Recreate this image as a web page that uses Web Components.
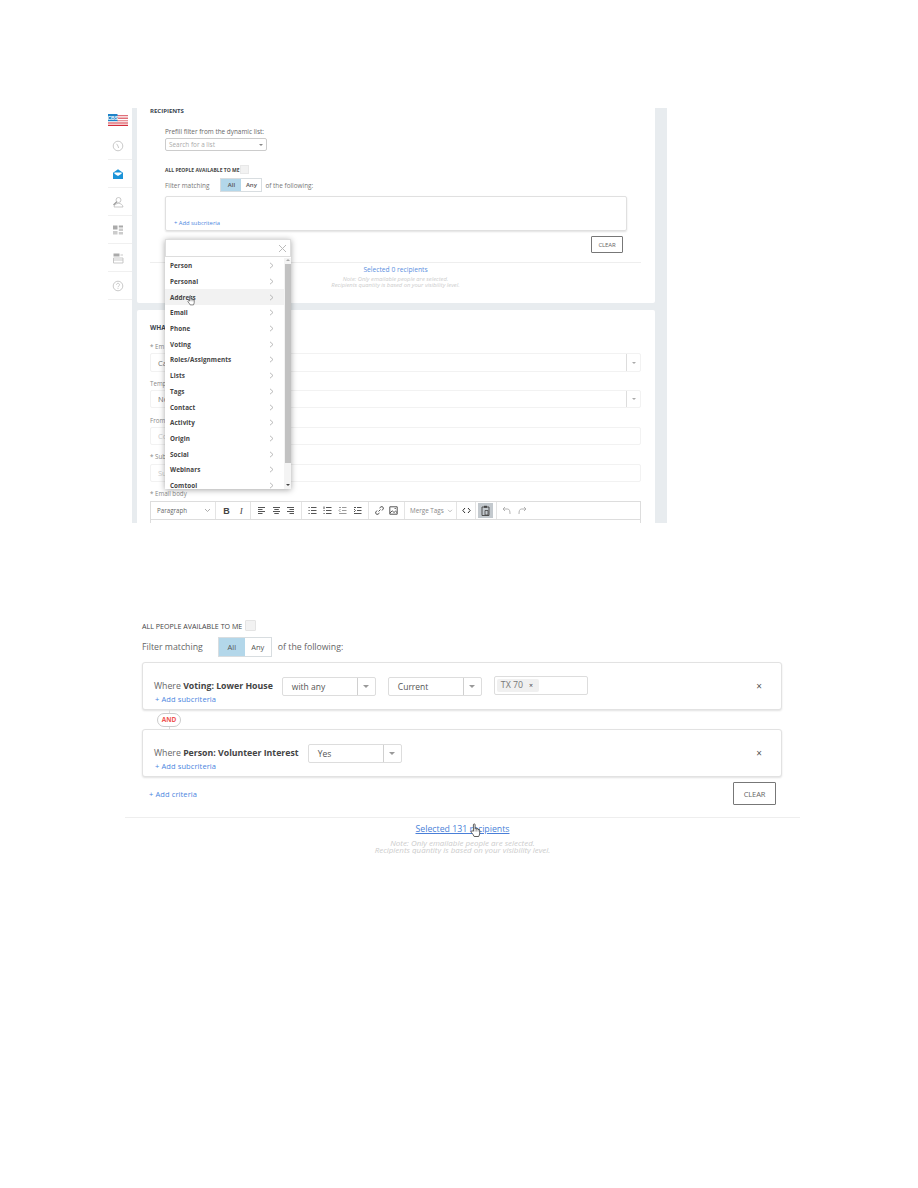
<!DOCTYPE html>
<html>
<head>
<meta charset="utf-8">
<title>Recipients</title>
<style>
  html, body { margin: 0; background: #fff; }
  body { font-family: "Open Sans", "Liberation Sans", sans-serif; color: #555; }
</style>
</head>
<body>
<top-shot></top-shot>
<filter-shot></filter-shot>

<script>
const CHEVRON = `<svg width="5" height="7" viewBox="0 0 5 7"><path d="M1 .8 4 3.5 1 6.2" fill="none" stroke="#aaa" stroke-width=".8"/></svg>`;

class HandCursor extends HTMLElement {
  constructor() {
    super();
    this.attachShadow({ mode: "open" }).innerHTML = `
      <style>
        :host { position: absolute; display: block; width: 12px; height: 15px; z-index: 5; }
        svg { display: block; width: 100%; height: 100%; }
      </style>
      <svg viewBox="0 0 12 15">
        <path d="M3.4 8.2V1.8c0-1.2 1.7-1.2 1.7 0v4c0-.9 1.6-.9 1.6 0v.5c0-.9 1.5-.9 1.5 0v.6c0-.8 1.5-.8 1.5.1v3.3c0 1.5-.7 2.2-1 3.2H4.2C3.6 12 2.6 11 1.3 9.4.6 8.4 1.7 7.3 2.6 8z" fill="#fff" stroke="#333" stroke-width=".8" stroke-linejoin="round"/>
        <path d="M5.1 6v2.6M6.7 6.3v2.3M8.2 6.8v1.8" stroke="#555" stroke-width=".5"/>
      </svg>`;
  }
}
customElements.define("hand-cursor", HandCursor);

class SideRail extends HTMLElement {
  constructor() {
    super();
    const stroke = `fill="none" stroke="#bbb" stroke-width=".8"`;
    const icons = [
      `<circle cx="6" cy="6" r="4.8" ${stroke}/><path d="M4.6 3.8 6 6l.6 2" ${stroke}/>`,
      `<path d="M1 4.8 6 1.2l5 3.6V11H1z" fill="#1b93d8"/><path d="M2.4 4.6h7.2v1.2L6 8 2.4 5.8z" fill="#fff"/>`,
      `<circle cx="6.5" cy="4" r="2.5" ${stroke}/><path d="M2 11c.4-2.6 2.5-3.6 4.5-3.6s4.1 1 4.5 3.6z" ${stroke}/><path d="M4.8 5.8 1.5 9" stroke="#999" stroke-width="1.2"/>`,
      `<path d="M1 1.5h4.5v4H1zM6.8 1.5H11v2H6.8z" fill="#aaa"/><path d="M1 7h4.5v3.500H1zM6.8 4.5H11V7H6.8zM6.8 8H11v2.500H6.8z" fill="#ccc"/>`,
      `<path d="M1.5 1.5v3h6v-3z" fill="#aaa"/><path d="M1.5 6H11v5H1.5z" ${stroke}/><path d="M1.5 8H11M8.5 3H11" ${stroke}/>`,
      `<circle cx="6" cy="6" r="4.8" ${stroke}/><path d="M4.5 4.8c0-2 3-2 3 0 0 1.2-1.5 1.2-1.5 2.4M6 8.2V9" ${stroke}/>`
    ];
    this.attachShadow({ mode: "open" }).innerHTML = `
      <style>
        :host { display: block; width: 24px; background: #fff; }
        .logo { height: 24px; display: flex; align-items: center; }
        .item { height: 27px; border-bottom: 1px solid #f0f0f0; display: flex; align-items: center; justify-content: center; }
        .item svg { margin-left: -4px; }
      </style>
      <div class="logo">
        <svg width="20" height="12" viewBox="0 0 20 12">
          <path d="M9 1h11v1.3H9zM9 3.600h11v1.3H9zM9 6.200h11v1H9z" fill="#e0707a"/>
          <path d="M0 8.400h20v1.2H0zM0 10.800h20V12H0z" fill="#d42c3a"/>
          <path d="M0 0h9.500v7.200H0z" fill="#1f83c8"/>
          <text x="4.700" y="5.800" text-anchor="middle" font-family="Liberation Sans, sans-serif" font-size="5" font-weight="700" fill="#fff">CBS</text>
        </svg>
      </div>
      ${icons.map(i => `<div class="item"><svg width="12" height="12" viewBox="0 0 12 12">${i}</svg></div>`).join("")}`;
  }
}
customElements.define("side-rail", SideRail);

class FilterToggle extends HTMLElement {
  constructor() {
    super();
    this.attachShadow({ mode: "open" }).innerHTML = `
      <style>
        :host { display: flex; height: var(--h, 14px); border: 1px solid #d8dde0; box-sizing: border-box; font-size: var(--fs, 6px); font-weight: 600; }
        span { display: flex; align-items: center; justify-content: center; width: var(--w, 20px); color: #555; }
        .on { background: #b3d7ea; }
      </style>
      <span class="on">All</span><span>Any</span>`;
  }
}
customElements.define("filter-toggle", FilterToggle);

class ClearButton extends HTMLElement {
  constructor() {
    super();
    this.attachShadow({ mode: "open" }).innerHTML = `
      <style>
        :host { display: flex; align-items: center; justify-content: center; box-sizing: border-box; border: 1px solid #777; border-radius: 1px; color: #666; letter-spacing: -.1px; width: var(--w, 32px); height: var(--h, 17px); font-size: var(--fs, 6px); background: #fff; }
      </style>
      CLEAR`;
  }
}
customElements.define("clear-button", ClearButton);

class CaretSelect extends HTMLElement {
  constructor() {
    super();
    this.attachShadow({ mode: "open" }).innerHTML = `
      <style>
        :host { display: flex; box-sizing: border-box; width: 94px; height: 19px; border: 1px solid #ddd; border-radius: 2px; background: #fff; font-size: 8.5px; color: #555; flex: none; }
        .val { flex: 1; display: flex; align-items: center; padding-left: 9px; }
        .arrow { width: 17px; border-left: 1px solid #d0d0d0; display: flex; align-items: center; justify-content: center; }
        .arrow i { border: 3px solid transparent; border-top: 3px solid #999; border-bottom: 0; width: 0; height: 0; }
      </style>
      <div class="val"><slot></slot></div><div class="arrow"><i></i></div>`;
  }
}
customElements.define("caret-select", CaretSelect);

class CriteriaBox extends HTMLElement {
  constructor() {
    super();
    const where = this.getAttribute("where");
    this.attachShadow({ mode: "open" }).innerHTML = `
      <style>
        :host { display: block; box-sizing: border-box; height: 48px; border: 1px solid #e2e2e2; border-radius: 3px; box-shadow: 0 1px 2px rgba(0,0,0,.12); padding: 13px 0 0 11px; background: #fff; }
        .row { display: flex; align-items: center; gap: 12px; height: 20px; }
        .where { font-size: 8.75px; color: #666; margin-right: -3px; white-space: nowrap; }
        b { color: #444; font-weight: 700; }
        .close { margin-left: auto; margin-right: 19px; font-size: 10px; color: #555; line-height: 1; }
        .add { font-size: 7.5px; line-height: 8px; color: #4a86e0; margin: -1px 0 0 1px; letter-spacing: .1px; }
      </style>
      <div class="row">
        <div class="where">Where <b>${where}</b></div>
        <slot></slot>
        <div class="close">×</div>
      </div>
      <div class="add">+ Add subcriteria</div>`;
  }
}
customElements.define("criteria-box", CriteriaBox);

class TagInput extends HTMLElement {
  constructor() {
    super();
    this.attachShadow({ mode: "open" }).innerHTML = `
      <style>
        :host { display: flex; align-items: center; box-sizing: border-box; width: 94px; height: 19px; margin-top: -2px; border: 1px solid #ddd; border-radius: 2px; padding-left: 2px; flex: none; }
        .chip { width: 42px; height: 13px; box-sizing: border-box; background: #f0f0f0; border-radius: 2px; font-size: 8.8px; color: #777; display: flex; align-items: center; padding-left: 4px; gap: 6px; }
        .chip i { font-style: normal; font-size: 7px; color: #444; }
      </style>
      <div class="chip">TX 70 <i>×</i></div>`;
  }
}
customElements.define("tag-input", TagInput);

class FieldDropdown extends HTMLElement {
  constructor() {
    super();
    const groups = ["Person", "Personal", "Address", "Email", "Phone", "Voting", "Roles/Assignments", "Lists", "Tags", "Contact", "Activity", "Origin", "Social", "Webinars", "Comtool"];
    this.attachShadow({ mode: "open" }).innerHTML = `
      <style>
        :host { position: absolute; left: 57px; top: 131px; width: 126px; height: 250px; background: #fff; box-shadow: 0 1px 6px rgba(0,0,0,.35); z-index: 3; display: block; overflow: hidden; }
        .search { height: 18px; border: 1px solid #ddd; box-sizing: border-box; display: flex; align-items: center; justify-content: flex-end; padding-right: 3px; margin-bottom: 1px; }
        .body { display: flex; height: 231px; }
        .list { flex: 1; overflow: hidden; }
        .row { height: 15.7px; display: flex; align-items: center; justify-content: space-between; padding: 0 10px 0 5px; font-size: 6.3px; font-weight: 700; color: #444; letter-spacing: .1px; }
        .row.hover { background: #f2f2f2; }
        .bar { width: 7px; background: #f4f4f4; position: relative; display: flex; flex-direction: column; align-items: center; }
        .thumb { width: 6px; height: 199px; margin-top: 6px; background: #c2c2c2; }
        .up, .down { position: absolute; border: 2px solid transparent; width: 0; height: 0; }
        .up { top: 1px; border-bottom: 2px solid #aaa; border-top: 0; }
        .down { bottom: 3px; border-top: 2px solid #444; border-bottom: 0; }
      </style>
      <div class="search"><svg width="9" height="9" viewBox="0 0 9 9"><path d="M1 1l7 7M8 1 1 8" stroke="#bbb" stroke-width="1"/></svg></div>
      <div class="body">
        <div class="list">${groups.map(g => `<div class="row${g === "Address" ? " hover" : ""}">${g}${CHEVRON}</div>`).join("")}</div>
        <div class="bar"><i class="up"></i><div class="thumb"></div><i class="down"></i></div>
      </div>`;
  }
}
customElements.define("field-dropdown", FieldDropdown);

class EditorToolbar extends HTMLElement {
  constructor() {
    super();
    const c = `stroke="#555" stroke-width="1" fill="none"`;
    const svg = (d, extra = c) => `<svg width="9" height="9" viewBox="0 0 9 9"><path d="${d}" ${extra}/></svg>`;
    const groups = [
      [65, `<span class="para">Paragraph</span><svg width="7" height="5" viewBox="0 0 7 5"><path d="M1 1l2.5 2.5L6 1" fill="none" stroke="#999" stroke-width=".8"/></svg>`, "space-between", "0 4px 0 6px"],
      [35, `<b>B</b><i>I</i>`, "center", "0", "10px"],
      [51, svg("M1 1.5h7M1 3.5h4.5M1 5.5h7M1 7.5h4.5") + svg("M1 1.5h7M2.3 3.5h4.5M1 5.5h7M2.3 7.5h4.5") + svg("M1 1.5h7M3.5 3.5H8M1 5.5h7M3.5 7.5H8")],
      [67, svg("M3 1.5h5.5M3 4.5h5.5M3 7.5h5.5M.5 1.5h1.2M.5 4.5h1.2M.5 7.5h1.2") + svg("M3 1.5h5.5M3 4.5h5.5M3 7.5h5.5M1 .5V3M.5 4.5h1.2M.5 7.5h1.2") + svg("M4 1.5h4.5M4 4.5h4.5M1 7.5h7.5M1 1.5h2M2.5 3 1 4.5 2.5 6", `stroke="#999" stroke-width="1" fill="none"`) + svg("M4 1.5h4.5M4 4.5h4.5M1 7.5h7.5M1 1.5h2M1 3l1.5 1.5L1 6")],
      [36, svg("M3.5 5.500 5.500 3.500M4.500 2 6 .8c1.500-.8 3 1 2.200 2.200L7 4.500M4.500 7 3 8.200C1.500 9 0 7.200.8 6L2 4.500") + svg("M.8.8h7.400v7.400H.8zM1 7l2.200-2.200L5 6.500l1.500-1.300L8 6.500M5.600 2.500h1.200")],
      [52, `<span class="merge">Merge Tags</span><svg width="6" height="4" viewBox="0 0 7 5"><path d="M1 1l2.5 2.5L6 1" fill="none" stroke="#999" stroke-width=".8"/></svg>`, "flex-start", "0 0 0 5px", "3px"],
      [19, svg("M3 2 .8 4.5 3 7M6 2l2.2 2.5L6 7", `stroke="#333" stroke-width="1" fill="none"`)],
      [21, `<span class="active"><svg width="9" height="11" viewBox="0 0 9 11"><path d="M1 2h7v8.5H1z" fill="none" stroke="#444" stroke-width=".9"/><path d="M3 .8h3v2H3z" fill="#444"/><path d="M4 5.5h3V10H4z" fill="none" stroke="#444" stroke-width=".8"/></svg></span>`, "flex-start", "0 0 0 2px"],
      [0, svg("M3 1 1 3l2 2M1 3h4.5C7.5 3 8 5 8 8", `stroke="#aaa" stroke-width=".9" fill="none"`) + svg("M6 1l2 2-2 2M8 3H3.5C1.5 3 1 5 1 8", `stroke="#aaa" stroke-width=".9" fill="none"`), "flex-start", "0 0 0 5px", "7px"]
    ];
    this.attachShadow({ mode: "open" }).innerHTML = `
      <style>
        :host { display: flex; height: 19px; box-sizing: border-box; border: 1px solid #ddd; background: #fff; }
        .g { display: flex; align-items: center; box-sizing: border-box; border-right: 1px solid #e4e4e4; height: 100%; justify-content: space-evenly; }
        .g:last-child { border-right: 0; flex: 1; }
        .para { font-size: 6.2px; color: #666; }
        .merge { font-size: 6.3px; color: #888; }
        b { font: 700 9px "Liberation Sans", sans-serif; color: #444; }
        i { font: italic 400 9px "Liberation Serif", serif; color: #444; }
        .active { width: 15px; height: 15px; background: #c3c9ce; display: flex; align-items: center; justify-content: center; }
      </style>
      ${groups.map(([w, html, jc, pad, gap]) => `<div class="g" style="${w ? `width:${w}px;flex:none;` : ""}${jc ? `justify-content:${jc};` : ""}${pad ? `padding:${pad};` : ""}${gap ? `gap:${gap};` : ""}">${html}</div>`).join("")}`;
  }
}
customElements.define("editor-toolbar", EditorToolbar);

class RecipientsCard extends HTMLElement {
  constructor() {
    super();
    this.attachShadow({ mode: "open" }).innerHTML = `
      <style>
        :host { display: block; background: #fff; height: 195px; box-sizing: border-box; padding: 0 14px 0 13px; border-radius: 0 0 2px 2px; font-size: 6.4px; }
        .title { font-size: 6px; line-height: 7px; font-weight: 700; color: #3b4652; }
        .in { margin-left: 15px; }
        .prefill { margin-top: 13px; line-height: 8px; color: #666; }
        .select { margin-top: 2px; width: 102px; height: 13px; box-sizing: border-box; border: 1px solid #ccc; border-radius: 2px; display: flex; align-items: center; justify-content: space-between; padding: 0 3px; color: #aaa; font-size: 6.4px; }
        .select i { border: 2px solid transparent; border-top: 2.5px solid #888; border-bottom: 0; }
        .all { margin-top: 14px; height: 9px; display: flex; align-items: center; gap: 1px; font-size: 5px; font-weight: 700; color: #444; white-space: nowrap; }
        .check { width: 9px; height: 9px; background: #f2f2f2; border: 1px solid #e8e8e8; box-sizing: border-box; }
        .match { margin-top: 4px; display: flex; align-items: center; color: #777; }
        filter-toggle { margin: 0 3px 0 11px; --w: 20px; }
        .box { margin: 4px 14px 0 15px; height: 35px; box-sizing: border-box; border: 1px solid #e0e0e0; border-radius: 2px; box-shadow: 0 1px 2px rgba(0,0,0,.12); display: flex; align-items: flex-end; padding: 0 0 3px 8px; color: #4a86e0; font-size: 5.8px; }
        .clear { margin: 5px 18px 0 0; display: flex; justify-content: flex-end; }
        hr { border: 0; border-top: 1px solid #eee; margin: 9px 0 0; }
        .sel { margin-top: 3px; text-align: center; line-height: 8px; color: #5b8fe0; font-size: 6.7px; }
        .note { margin-top: 3px; text-align: center; line-height: 5.5px; color: #ccc; font-style: italic; font-size: 5.8px; }
      </style>
      <div class="title">RECIPIENTS</div>
      <div class="in prefill">Prefill filter from the dynamic list:</div>
      <div class="in select">Search for a list<i></i></div>
      <div class="in all">ALL PEOPLE AVAILABLE TO ME <span class="check"></span></div>
      <div class="in match">Filter matching<filter-toggle></filter-toggle>of the following:</div>
      <div class="box">+ Add subcriteria</div>
      <div class="clear"><clear-button></clear-button></div>
      <hr>
      <div class="sel">Selected 0 recipients</div>
      <div class="note">Note: Only emailable people are selected.<br>Recipients quantity is based on your visibility level.</div>`;
  }
}
customElements.define("recipients-card", RecipientsCard);

class WhatCard extends HTMLElement {
  constructor() {
    super();
    const caret = `<span class="caret"><i></i></span>`;
    this.attachShadow({ mode: "open" }).innerHTML = `
      <style>
        :host { display: block; background: #fff; margin-top: 7px; padding: 14px 14px 0 13px; border-radius: 2px 2px 0 0; height: 300px; box-sizing: border-box; font-size: 6.2px; }
        .title { font-size: 6.5px; line-height: 7px; font-weight: 700; color: #3b4652; }
        .label { line-height: 8px; margin-top: 8px; color: #888; }
        .first { margin-top: 12px; }
        .control { display: flex; align-items: center; justify-content: space-between; margin-top: 2px; height: 18px; box-sizing: border-box; border: 1px solid #f2f2f2; border-radius: 2px; padding-left: 7px; font-size: 7.5px; color: #777; }
        .dim { color: #ccc; }
        .caret { width: 13px; height: 100%; border-left: 1px solid #ddd; display: flex; align-items: center; justify-content: center; }
        .caret i { border: 2px solid transparent; border-top: 2.5px solid #aaa; border-bottom: 0; }
        .tall { height: 19px; }
        .low { margin-top: 3px; }
        .l9 { margin-top: 9px; }
        editor-toolbar { margin-top: 3px; }
        .editor { height: 60px; border: 1px solid #ddd; border-top: 0; }
      </style>
      <div class="title">WHA</div>
      <div class="label first">* Em</div>
      <div class="control tall">Ca${caret}</div>
      <div class="label">Temp</div>
      <div class="control">No${caret}</div>
      <div class="label l9">From</div>
      <div class="control dim">Co</div>
      <div class="label">* Sub</div>
      <div class="control low dim">Su</div>
      <div class="label">* Email body</div>
      <editor-toolbar></editor-toolbar>
      <div class="editor"></div>`;
  }
}
customElements.define("what-card", WhatCard);

class TopShot extends HTMLElement {
  constructor() {
    super();
    this.attachShadow({ mode: "open" }).innerHTML = `
      <style>
        :host { display: flex; position: relative; margin: 108px 0 0 108px; width: 559px; height: 415px; overflow: hidden; }
        .main { flex: 1; background: #e8ecef; padding: 0 12px 0 5px; overflow: hidden; }
        hand-cursor { left: 79px; top: 187px; width: 9px; height: 11px; }
      </style>
      <side-rail></side-rail>
      <div class="main">
        <recipients-card></recipients-card>
        <what-card></what-card>
      </div>
      <field-dropdown></field-dropdown>
      <hand-cursor></hand-cursor>`;
  }
}
customElements.define("top-shot", TopShot);

class FilterShot extends HTMLElement {
  constructor() {
    super();
    this.attachShadow({ mode: "open" }).innerHTML = `
      <style>
        :host { display: block; position: relative; margin: 87px 0 0 125px; width: 675px; padding-top: 10px; font-size: 8.75px; }
        .in { margin: 0 18px 0 17px; }
        .all { height: 11px; display: flex; align-items: center; gap: 3px; font-size: 7.1px; color: #444; font-weight: 400; white-space: nowrap; }
        .check { width: 11px; height: 11px; box-sizing: border-box; background: #f2f2f2; border: 1px solid #e4e4e4; border-radius: 1px; }
        .match { margin-top: 6px; display: flex; align-items: center; color: #666; }
        filter-toggle { margin: 0 6px 0 15px; --w: 26px; --h: 20px; --fs: 7.5px; font-weight: 400; }
        .first { margin-top: 5px; }
        .and { height: 19px; display: flex; align-items: center; margin-left: 15px; background: linear-gradient(#ddd, #ddd) 12px 0 / 1px 100% no-repeat; width: 24px; }
        .and span { width: 24px; height: 14px; box-sizing: border-box; border: 1px solid #ccc; border-radius: 7px; background: #fff; color: #ef5350; font-size: 6.5px; font-weight: 700; display: flex; align-items: center; justify-content: center; }
        .foot { margin-top: 5px; padding: 0 6px 0 7px; display: flex; justify-content: space-between; align-items: center; }
        .foot span { color: #4a86e0; font-size: 7.5px; letter-spacing: .1px; }
        clear-button { --w: 43px; --h: 23px; --fs: 7.5px; }
        hr { border: 0; border-top: 1px solid #eee; margin: 12px 0 0; }
        .sel { margin-top: 5px; text-align: center; line-height: 12px; color: #4a7fd8; font-size: 8.75px; text-decoration: underline; }
        .note { margin-top: 5px; text-align: center; line-height: 7px; color: #ccc; font-style: italic; font-size: 7.95px; }
        hand-cursor { left: 345px; top: 213px; }
      </style>
      <div class="in">
        <div class="all">ALL PEOPLE AVAILABLE TO ME <span class="check"></span></div>
        <div class="match">Filter matching<filter-toggle></filter-toggle>of the following:</div>
        <criteria-box class="first" where="Voting: Lower House">
          <caret-select>with any</caret-select>
          <caret-select>Current</caret-select>
          <tag-input></tag-input>
        </criteria-box>
        <div class="and"><span>AND</span></div>
        <criteria-box where="Person: Volunteer Interest">
          <caret-select>Yes</caret-select>
        </criteria-box>
        <div class="foot"><span>+ Add criteria</span><clear-button></clear-button></div>
      </div>
      <hr>
      <div class="sel">Selected 131 recipients</div>
      <div class="note">Note: Only emailable people are selected.<br>Recipients quantity is based on your visibility level.</div>
      <hand-cursor></hand-cursor>`;
  }
}
customElements.define("filter-shot", FilterShot);
</script>
</body>
</html>
